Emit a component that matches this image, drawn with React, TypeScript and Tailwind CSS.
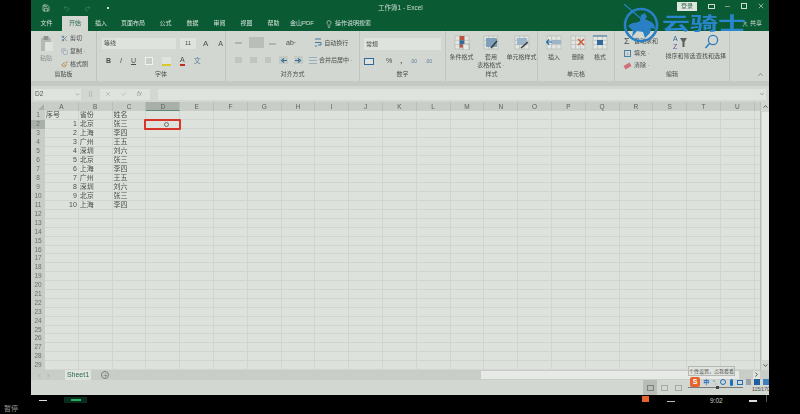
import { Save, Undo2, Redo2, Scissors, Copy, Paintbrush, Lightbulb, X, Check, ChevronDown, ChevronUp, ChevronLeft, ChevronRight, Plus, Minus, User } from "lucide-react";

const cjk = "font-['Liberation_Sans','Noto_Sans_CJK_SC',sans-serif]";

const tabs = ["文件", "开始", "插入", "页面布局", "公式", "数据", "审阅", "视图", "帮助", "金山PDF"];
const cols = "ABCDEFGHIJKLMNOPQRSTU".split("");
const rows = Array.from({ length: 29 }, (_, i) => i + 1);
const data = [
  ["北京", "张三"],
  ["上海", "李四"],
  ["广州", "王五"],
  ["深圳", "刘六"],
  ["北京", "张三"],
  ["上海", "李四"],
  ["广州", "王五"],
  ["深圳", "刘六"],
  ["北京", "张三"],
  ["上海", "李四"],
];

function Group({ w, label, children }: { w: string; label: string; children?: React.ReactNode }) {
  return (
    <div className={`${w} h-full flex flex-col border-r border-[#bfc4bf] shrink-0`}>
      <div className="flex-1 flex min-h-0">{children}</div>
      <div className="h-[12px] text-center text-[6px] leading-[10px] text-[#4b4f4c]">{label}</div>
    </div>
  );
}

// faint spreadsheet grid that sits behind most of the big ribbon icons
function MiniGrid() {
  return (
    <g stroke="#b4b9b4" strokeWidth="0.7" fill="#e3e7e2">
      <rect x="1" y="1" width="14" height="13" />
      <path d="M1 5.3H15M1 9.6H15M5.6 1V14M10.3 1V14" fill="none" />
    </g>
  );
}

function BigBtn({ label, w, icon }: { label: React.ReactNode; w: string; icon: React.ReactNode }) {
  return (
    <div className={`${w} flex flex-col items-center pt-[4px] text-[6px] leading-[8px] text-[#4b4f4c] text-center whitespace-nowrap shrink-0`}>
      <svg width="16" height="15" viewBox="0 0 16 15" className="mb-[3px] shrink-0">
        <MiniGrid />
        {icon}
      </svg>
      {label}
    </div>
  );
}

function Arrow({ right }: { right?: boolean }) {
  return (
    <div className="w-[9px] h-[8px] bg-[#c4c9c4] flex items-center justify-center">
      <svg width="7" height="5" viewBox="0 0 7 5">
        <path d={right ? "M0 2.5H4M3 .5L5.5 2.5L3 4.5" : "M7 2.5H3M4 .5L1.5 2.5L4 4.5"} stroke="#2f6a9a" strokeWidth="1.1" fill="none" />
      </svg>
    </div>
  );
}

export default function App() {
  return (
    <div className={`w-[800px] h-[414px] bg-black overflow-hidden relative ${cjk}`}>
      <div className="w-[738px] ml-[31px] h-[395px] flex flex-col bg-[#d3d7d2] blur-[0.5px]">
        {/* title bar */}
        <div className="h-[16px] bg-[#0a5a34] flex items-center text-[#cfdcd3] relative shrink-0">
          <Save size={8} className="ml-[11px]" />
          <Undo2 size={7} className="ml-[13px] text-[#4f8468]" />
          <Redo2 size={7} className="ml-[14px] text-[#4f8468]" />
          <div className="ml-[16px] w-[2px] h-[2px] bg-[#cfdcd3]" />
          <div className="absolute left-[347px] top-[3px] text-[6.5px] leading-[9px]">工作簿1 - Excel</div>
          <div className="absolute left-[646px] top-[2px] w-[20px] h-[9px] bg-[#dfe6e0] text-[#2f6b4b] text-[6px] leading-[9px] text-center">登录</div>
          <div className="absolute left-[677px] top-[4px] w-[7px] h-[5px] border border-[#cfdcd3]" />
          <Minus size={7} className="absolute left-[693px] top-[3px]" />
          <div className="absolute left-[710px] top-[3px] w-[6px] h-[6px] border border-[#cfdcd3]" />
          <X size={8} className="absolute left-[726px] top-[2px]" />
        </div>
        {/* tabs */}
        <div className="h-[15px] bg-[#0a5a34] flex items-end text-[6px] text-[#d3e0d7] shrink-0 relative">
          {tabs.map((t, i) => (
            <div
              key={t}
              className={`h-[15px] leading-[14px] text-center ${i === 1 ? "bg-[#d3d7d2] text-[#2d6b4a] w-[26px]" : ""} ${i === 0 ? "w-[31px]" : ""} ${i === 2 ? "w-[26px]" : ""} ${i === 3 ? "w-[38px]" : ""} ${i > 3 && i < 9 ? "w-[27px]" : ""} ${i === 9 ? "w-[32px] ml-[-1px]" : ""}`}
            >
              {t}
            </div>
          ))}
          <div className="ml-[7px] h-[15px] flex items-center gap-[2px]">
            <Lightbulb size={8} />
            <span>操作说明搜索</span>
          </div>
          <div className="absolute right-[7px] top-[3px] flex items-center gap-[2px]">
            <User size={6} />
            <span>共享</span>
          </div>
        </div>
        {/* ribbon */}
        <div className="h-[50px] flex shrink-0 text-[#4b4f4c] text-[6px]">
          <Group w="w-[66px]" label="剪贴板">
            <div className="w-[30px] flex flex-col items-center pt-[5px] text-[#8c918d]">
              <svg width="13" height="15" viewBox="0 0 13 15" className="mb-[3px]">
                <rect x="1" y="2" width="10" height="13" fill="#b5b9b5" />
                <rect x="3.5" y="0" width="5" height="4" fill="#8f9490" />
                <rect x="5" y="6" width="8" height="9" fill="#dfe3de" />
              </svg>
              <span className="leading-[8px]">粘贴</span>
            </div>
            <div className="flex flex-col pt-[3px] gap-[4px] leading-[9px]">
              <div className="flex items-center gap-[2px]"><Scissors size={7} className="text-[#4a6f8c]" />剪切</div>
              <div className="flex items-center gap-[2px]"><Copy size={7} className="text-[#8c9fae]" />复制 ·</div>
              <div className="flex items-center gap-[2px]"><Paintbrush size={7} className="text-[#b5873d]" />格式刷</div>
            </div>
          </Group>
          <Group w="w-[129px]" label="字体">
            <div className="flex flex-col pl-[5px] pt-[7px] gap-[7px]">
              <div className="flex items-center gap-[4px]">
                <div className="w-[74px] h-[11px] bg-[#dfe3de] pl-[2px] leading-[11px]">等线</div>
                <div className="w-[16px] h-[11px] bg-[#dfe3de] leading-[11px] text-center">11</div>
                <span className="text-[8px] leading-[11px] ml-[3px]">A</span>
                <span className="text-[7px] leading-[11px] ml-[6px]">A</span>
              </div>
              <div className="flex items-center gap-[9px] text-[7px] font-bold leading-[10px] pl-[4px]">
                <span>B</span>
                <span className="italic font-normal">I</span>
                <span className="underline font-normal">U</span>
                <div className="w-[8px] h-[8px] border border-[#f0f2ef] bg-[#c9cdc8]" />
                <div className="w-[9px] h-[9px] border-b-2 border-[#d9c828] bg-[#dfe3de]" />
                <span className="border-b-2 border-[#c42b22] leading-[8px] font-normal">A</span>
                <span className="font-normal text-[#5d7f95]">文</span>
              </div>
            </div>
          </Group>
          <Group w="w-[134px]" label="对齐方式">
            <div className="flex flex-col pl-[9px] pt-[6px] gap-[7px]">
              <div className="flex items-center leading-[10px]">
                <div className="w-[7px] h-[2px] bg-[#b0b5b0]" />
                <div className="ml-[7px] w-[15px] h-[11px] bg-[#b9beb9]" />
                <div className="ml-[5px] w-[7px] h-[2px] bg-[#b0b5b0] mt-[3px]" />
                <span className="ml-[10px] text-[7px]">ab·</span>
                <svg width="8" height="9" viewBox="0 0 8 9" className="ml-[18px]">
                  <path d="M1 1H7M1 4.5H7V7H4M1 8H3" stroke="#3f7aa5" strokeWidth="1" fill="none" />
                </svg>
                <span className="ml-[2px]">自动换行</span>
              </div>
              <div className="flex items-center leading-[10px]">
                <div className="w-[7px] h-[6px] bg-[#c0c5c0]" />
                <div className="ml-[8px] w-[7px] h-[6px] bg-[#c0c5c0]" />
                <div className="ml-[8px] w-[6px] h-[6px] bg-[#c0c5c0]" />
                <div className="ml-[8px]"><Arrow /></div>
                <div className="ml-[6px]"><Arrow right /></div>
                <svg width="8" height="7" viewBox="0 0 8 7" className="ml-[6px]">
                  <path d="M0 3.5H8M0 0.5H8M0 6.5H8" stroke="#8aa2b4" strokeWidth="0.8" fill="none" />
                </svg>
                <span className="ml-[2px] whitespace-nowrap">合并后居中 ·</span>
              </div>
            </div>
          </Group>
          <Group w="w-[86px]" label="数字">
            <div className="flex flex-col pl-[4px] pt-[7px] gap-[6px]">
              <div className="w-[77px] h-[12px] bg-[#dfe3de] leading-[12px] pl-[2px]">常规</div>
              <div className="flex items-center gap-[8px] text-[7px] leading-[10px]">
                <div className="w-[10px] h-[7px] bg-[#dfe3de] border border-[#2f6a9a]" />
                <span className="ml-[4px]">%</span>
                <span className="font-bold">,</span>
                <span className="text-[5px] text-[#5b7f95]">.00</span>
                <span className="text-[5px] text-[#5b7f95]">.00</span>
              </div>
            </div>
          </Group>
          <Group w="w-[92px]" label="样式">
            <BigBtn
              w="w-[31px]"
              label="条件格式"
              icon={
                <>
                  <rect x="5.6" y="1" width="4.7" height="4.3" fill="#c0503a" />
                  <rect x="5.6" y="5.3" width="4.7" height="4.3" fill="#2f6a9a" />
                  <rect x="5.6" y="9.6" width="4.7" height="3" fill="#c0503a" />
                  <rect x="9" y="9" width="6" height="6" fill="#e8ebe7" stroke="#8b908c" strokeWidth="0.6" />
                </>
              }
            />
            <BigBtn
              w="w-[28px]"
              label={<>套用<br />表格格式 ·</>}
              icon={
                <>
                  <rect x="3" y="3" width="11" height="9" fill="#7f9fbd" />
                  <path d="M8 13L14 6" stroke="#3a3f3c" strokeWidth="1.6" />
                </>
              }
            />
            <BigBtn
              w="w-[33px]"
              label="单元格样式"
              icon={
                <>
                  <rect x="3" y="3" width="10" height="7" fill="#9db5c8" />
                  <path d="M7 13L14 7" stroke="#3a3f3c" strokeWidth="1.6" />
                </>
              }
            />
          </Group>
          <Group w="w-[77px]" label="单元格">
            <BigBtn
              w="w-[32px]"
              label="插入"
              icon={
                <>
                  <rect x="6" y="5" width="9" height="4" fill="#9db5c8" />
                  <path d="M6 7H0M3 4.5L0.5 7L3 9.5" stroke="#1f6aa8" strokeWidth="1.2" fill="none" />
                </>
              }
            />
            <BigBtn
              w="w-[16px]"
              label="删除"
              icon={<path d="M8 4L14 10M14 4L8 10" stroke="#d0552f" strokeWidth="1.4" />}
            />
            <BigBtn
              w="w-[28px]"
              label="格式"
              icon={
                <>
                  <rect x="5" y="5" width="6" height="5" fill="#2f6a9a" />
                  <path d="M1 1H15" stroke="#2f6a9a" strokeWidth="0.9" />
                </>
              }
            />
          </Group>
          <Group w="w-[115px]" label="编辑">
            <div className="flex flex-col pl-[9px] pt-[6px] gap-[3px] leading-[9px] w-[50px] shrink-0 whitespace-nowrap">
              <div className="flex items-center gap-[3px]"><span className="text-[9px] w-[7px]">Σ</span>自动求和</div>
              <div className="flex items-center gap-[3px]">
                <div className="w-[7px] h-[7px] border border-[#4a7fa8] text-[#2f6a9a] text-[5px] leading-[5px] text-center">↓</div>填充 ·
              </div>
              <div className="flex items-center gap-[3px]"><div className="w-[7px] h-[4px] bg-[#d0707a] -rotate-30" />清除 ·</div>
            </div>
            <div className="w-[31px] pt-[3px] flex flex-col items-center leading-[8px] whitespace-nowrap shrink-0">
              <svg width="16" height="16" viewBox="0 0 16 16" className="mb-[2px]">
                <text x="0" y="7" fontSize="7" fill="#2f6a9a">A</text>
                <text x="0" y="15" fontSize="7" fill="#6a4fa8">Z</text>
                <path d="M7 4H14L11.5 8V13H9.5V8Z" fill="#5c615d" />
              </svg>
              排序和筛选
            </div>
            <div className="w-[30px] pt-[3px] flex flex-col items-center leading-[8px] whitespace-nowrap shrink-0">
              <svg width="15" height="16" viewBox="0 0 15 16" className="mb-[2px]">
                <circle cx="9" cy="6" r="4.6" stroke="#2f7db8" strokeWidth="1.3" fill="none" />
                <path d="M5.5 9.5L1.5 14" stroke="#2f7db8" strokeWidth="1.6" />
              </svg>
              查找和选择
            </div>
          </Group>
          <div className="flex-1 relative">
            <ChevronUp size={7} className="absolute right-[5px] bottom-[3px]" />
          </div>
        </div>
        <div className="h-[5px] bg-[#c5c9c4] shrink-0" />
        {/* formula bar */}
        <div className="h-[16px] flex items-center pl-[3px] pr-[3px] gap-[8px] text-[6.5px] text-[#555a56] shrink-0">
          <div className="w-[47px] h-[11px] bg-[#dfe3de] flex items-center justify-between px-[1px]">
            D2
            <ChevronDown size={5} />
          </div>
          <div className="w-[3px] h-[6px] border-x border-[#b8bcb8]" />
          <div className="w-[50px] h-[11px] bg-[#dfe3de] flex items-center gap-[10px] pl-[5px] text-[#9a9e9a]">
            <X size={6} />
            <Check size={6} />
            <span className="italic">fx</span>
          </div>
          <div className="flex-1 h-[11px] bg-[#dfe3de] flex items-center justify-end pr-[1px]">
            <ChevronDown size={6} />
          </div>
        </div>
        {/* sheet */}
        <div className="flex-1 flex min-h-0 relative">
          <div className="flex flex-col w-[729px] shrink-0">
            <div className="h-[9px] flex bg-[#c9cdc8] text-[6.5px] leading-[9px] text-[#5c615d]">
              <div className="w-[14px] shrink-0 relative">
                <div className="absolute right-[1px] bottom-[1px] w-0 h-0 border-l-[6px] border-t-[6px] border-l-transparent border-t-transparent border-b-0 border-r-[6px] border-r-[#a9afa9]" />
              </div>
              {cols.map((c) => (
                <div key={c} className={`w-[33.8px] shrink-0 text-center border-r border-[#babeb9] ${c === "D" ? "bg-[#a9afa9] border-b border-b-[#5e8a72]" : ""}`}>{c}</div>
              ))}
            </div>
            {rows.map((r) => {
              const d = data[r - 2];
              return (
                <div key={r} className="h-[9px] flex text-[7px] leading-[8px] text-[#4b4f4c]">
                  <div className={`w-[14px] shrink-0 text-center text-[6.5px] text-[#6a6f6b] ${r === 2 ? "bg-[#a9afa9]" : "bg-[#c9cdc8]"}`}>{r}</div>
                  {cols.map((c, ci) => (
                    <div key={c} className="w-[33.8px] shrink-0 bg-[#dde2dc] border-r border-b border-[#d0d5cf] px-[1px] overflow-hidden whitespace-nowrap">
                      {r === 1 && ci === 0 && "序号"}
                      {r === 1 && ci === 1 && "省份"}
                      {r === 1 && ci === 2 && "姓名"}
                      {d && ci === 0 && <div className="text-right">{r - 1}</div>}
                      {d && ci === 1 && d[0]}
                      {d && ci === 2 && d[1]}
                    </div>
                  ))}
                  <div className="flex-1 bg-[#dde2dc] border-b border-[#d0d5cf]" />
                </div>
              );
            })}
          </div>
          {/* scroll bar */}
          <div className="flex-1 flex flex-col bg-[#d3d7d2] border-l border-[#babeb9] items-center">
            <ChevronUp size={7} className="mt-[1px]" />
            <div className="w-[7px] flex-1 my-[2px] bg-[#e6e9e5]" />
            <ChevronDown size={7} className="mb-[1px]" />
          </div>
          {/* selected cell */}
          <div className="absolute left-[113px] top-[17px] w-[37px] h-[11px] border-2 border-[#d8352a] rounded-[1px] flex items-center justify-end pr-[10px]">
            <div className="w-[5px] h-[5px] rounded-full border border-[#6a6f6b]" />
          </div>
        </div>
        {/* sheet tabs */}
        <div className="h-[10px] flex items-center bg-[#c9cdc8] text-[6.5px] shrink-0 relative">
          <ChevronLeft size={5} className="ml-[6px] text-[#8b908c]" />
          <ChevronRight size={5} className="ml-[4px] text-[#8b908c]" />
          <div className="ml-[14px] w-[26px] h-[10px] bg-[#e0e4df] text-[#2d6b4a] text-[7px] leading-[9px] text-center">Sheet1</div>
          <div className="ml-[10px] w-[8px] h-[8px] rounded-full border border-[#7b807c] flex items-center justify-center">
            <Plus size={5} className="text-[#5c615d]" />
          </div>
          <div className="absolute left-[450px] right-[9px] top-[1px] h-[8px] bg-[#e6e9e5] flex justify-end">
            <div className="w-[14px] h-[8px] bg-[#c9cdc8]" />
            <ChevronRight size={7} className="bg-[#dfe3de]" />
          </div>
        </div>
        {/* status bar */}
        <div className="h-[15px] shrink-0 relative flex items-center justify-end bg-[#d3d7d2]">
          <div className="flex mr-[84px]">
            <div className="w-[14px] h-[15px] bg-[#b9bdb8] flex items-center justify-center"><div className="w-[7px] h-[6px] border border-[#7d827e]" /></div>
            <div className="w-[14px] h-[15px] flex items-center justify-center"><div className="w-[7px] h-[6px] border border-[#a5aaa6]" /></div>
            <div className="w-[14px] h-[15px] flex items-center justify-center"><div className="w-[7px] h-[6px] border border-[#a5aaa6]" /></div>
          </div>
        </div>
      </div>

      {/* ime tooltip */}
      <div className="absolute left-[688px] top-[366px] w-[47px] h-[10px] bg-[#dfe3de] border border-[#b5bab5] text-[5px] leading-[8px] text-center text-[#555] whitespace-nowrap overflow-hidden">个性设置，点我看看</div>
      {/* ime toolbar */}
      <div className="absolute left-[690px] top-[377px] flex items-center text-[6px] leading-[9px] text-[#1f6fbf]">
        <div className="w-[10px] h-[10px] rounded-[2px] bg-[#e8622c] text-white text-[7px] leading-[10px] text-center font-bold mr-[2px]">S</div>
        <div className="w-[8.5px] flex justify-center font-bold mt-[1px]">中</div>
        <div className="w-[8.5px] flex justify-center">°,</div>
        <div className="w-[8.5px] flex justify-center"><div className="w-[6px] h-[6px] rounded-full border border-[#1f6fbf]" /></div>
        <div className="w-[8.5px] flex justify-center"><div className="w-[3px] h-[7px] rounded-full bg-[#1f6fbf]" /></div>
        <div className="w-[8.5px] flex justify-center"><div className="w-[6px] h-[5px] border border-[#1f6fbf]" /></div>
        <div className="w-[8.5px] flex justify-center"><div className="w-[5px] h-[6px] bg-[#9aa0a6]" /></div>
        <div className="w-[8.5px] flex justify-center"><div className="w-[6px] h-[6px] bg-[#1f5f9f]" /></div>
        <div className="w-[8.5px] flex justify-center"><div className="w-[6px] h-[6px] bg-[#3f7fbf]" /></div>
      </div>
      <div className="absolute left-[688px] top-[387px] w-[55px] h-[1px] bg-[#777c78]" />
      <div className="absolute left-[716px] top-[386px] w-[3px] h-[3px] bg-[#444]" />
      <div className="absolute left-[752px] top-[386px] text-[5px] leading-[6px] text-[#444]">115/170</div>

      {/* watermark */}
      <div className="absolute left-[622px] top-[4px] flex items-center">
        <svg width="40" height="40" viewBox="0 0 40 40" fill="none">
          <circle cx="19" cy="21" r="16" stroke="#2a80c4" strokeWidth="2.6" />
          <path d="M2 0 L24 19" stroke="#2a80c4" strokeWidth="1.2" />
          <path d="M6 22 C11 17 15 20 18 17 L19 11 L23 9 L25 13 L23 15 L27 17 C31 18 33 21 33 25 L29 24 L28 29 L23 34 L21 28 L15 27 L10 33 L11 27 Z" fill="#2a80c4" />
        </svg>
        <div className="ml-[0px] text-[28px] leading-[30px] font-bold tracking-[0px] text-[#2a86cc] scale-y-[0.65] whitespace-nowrap">云骑士</div>
      </div>

      {/* bottom strip */}
      <div className="absolute left-[39px] top-[400px] w-[8px] h-[1px] bg-[#ddd]" />
      <div className="absolute left-[64px] top-[397px] w-[23px] h-[6px] bg-[#0b2a1c] flex items-center justify-center">
        <div className="w-[10px] h-[2px] bg-[#1fae63]" />
      </div>
      <div className="absolute left-[4px] top-[404px] text-[7px] leading-[9px] text-[#9a9a9a]">暂停</div>
      <div className="absolute left-[642px] top-[396px] w-[7px] h-[6px] bg-[#e8622c]" />
      <div className="absolute left-[667px] top-[401px] w-[8px] h-[1px] bg-[#bbb]" />
      <div className="absolute left-[710px] top-[397px] text-[6.5px] leading-[8px] text-[#ccc]">9:02</div>
      <div className="absolute left-[749px] top-[400px] w-[8px] h-[2px] bg-[#ddd]" />
      <div className="absolute left-[766px] top-[395px] w-[1px] h-[7px] bg-[#555]" />
    </div>
  );
}
